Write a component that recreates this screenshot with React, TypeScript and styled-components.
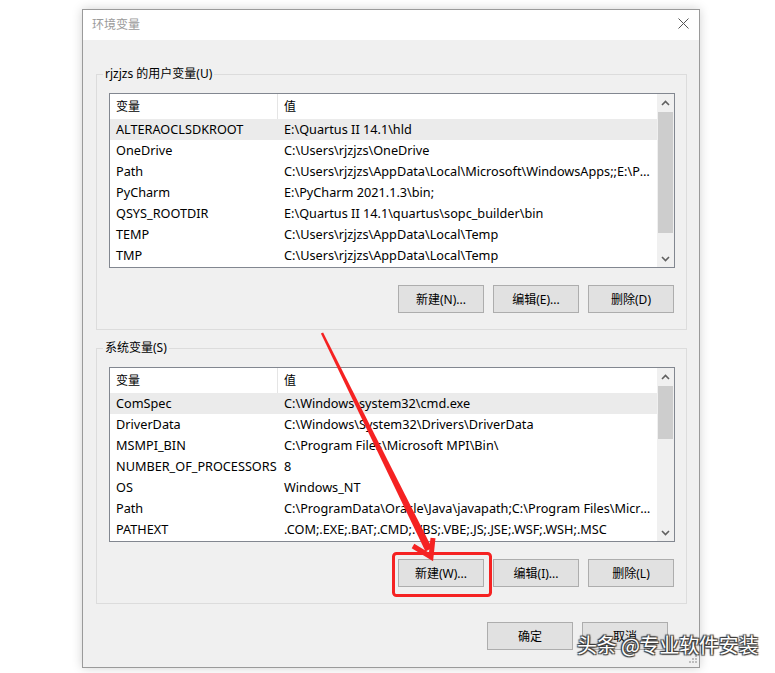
import React from "react";
import styled, { createGlobalStyle } from "styled-components";

const GlobalStyle = createGlobalStyle`
  html, body { margin: 0; padding: 0; background: #ffffff; }
  body {
    font-family: "Noto Sans", "Noto Sans CJK SC", "Liberation Sans", sans-serif;
    font-size: 12px;
    color: #000;
  }
  * { box-sizing: border-box; }
`;

const Page = styled.div`
  position: relative;
  width: 775px;
  height: 673px;
  padding: 9px 0 0 82px;
  overflow: hidden;
`;

const Window = styled.div`
  width: 618px;
  height: 659px;
  border: 1px solid #9a9a9a;
  background: #f0f0f0;
  display: flex;
  flex-direction: column;
  box-shadow: 0 0 10px rgba(0, 0, 0, 0.18);
  position: relative;
`;

const TitleBar = styled.div`
  height: 30px;
  background: #ffffff;
  display: flex;
  align-items: center;
  justify-content: space-between;
  padding: 0 10px 3px 9px;
  color: #9a9a9a;
  font-size: 12px;
`;

const Body = styled.div`
  flex: 1;
  display: flex;
  flex-direction: column;
  padding: 34px 12px 0 13px;
`;

const Group = styled.div<{ $gap?: number }>`
  position: relative;
  height: 256px;
  margin-top: ${(p) => p.$gap ?? 0}px;
  border: 1px solid #dcdcdc;
  padding: 18px 11px 0 12px;
  display: flex;
  flex-direction: column;
`;

const Legend = styled.span`
  position: absolute;
  top: -10px;
  left: 6px;
  padding: 0 2px;
  background: #f0f0f0;
  line-height: 18px;
  color: #000;
`;

const List = styled.div`
  height: 175px;
  border: 1px solid #828790;
  background: #ffffff;
  display: flex;
  font-size: 12.7px;
`;

const Table = styled.div`
  flex: 1;
  display: flex;
  flex-direction: column;
  overflow: hidden;
`;

const HeaderRow = styled.div`
  height: 25px;
  display: flex;
  align-items: center;
`;

const HeaderCell = styled.div<{ $w?: number; $divider?: boolean }>`
  width: ${(p) => (p.$w ? `${p.$w}px` : "auto")};
  flex: ${(p) => (p.$w ? "none" : "1")};
  height: 100%;
  display: flex;
  align-items: center;
  padding-left: 6px;
  padding-bottom: 1px;
  font-size: 12px;
  border-right: ${(p) => (p.$divider ? "1px solid #e5e5e5" : "none")};
`;

const Row = styled.div<{ $selected?: boolean }>`
  height: 21px;
  display: flex;
  align-items: center;
  padding-bottom: 1px;
  background: ${(p) => (p.$selected ? "#ebebeb" : "transparent")};
`;

const NameCell = styled.div`
  width: 168px;
  flex: none;
  padding-left: 6px;
  white-space: nowrap;
  overflow: hidden;
`;

const ValueCell = styled.div`
  flex: 1;
  min-width: 0;
  padding-left: 6px;
  padding-right: 4px;
  white-space: nowrap;
  overflow: hidden;
  text-overflow: ellipsis;
`;

const ScrollBar = styled.div`
  width: 17px;
  background: #f0f0f0;
  display: flex;
  flex-direction: column;
  align-items: center;
`;

const ScrollArrow = styled.div`
  width: 17px;
  height: 17px;
  display: flex;
  align-items: center;
  justify-content: center;
`;

const ScrollTrack = styled.div`
  flex: 1;
  width: 15px;
  display: flex;
  flex-direction: column;
`;

const Thumb = styled.div<{ $h: number }>`
  height: ${(p) => p.$h}px;
  background: #cdcdcd;
  margin-top: 1px;
`;

const ButtonRow = styled.div<{ $top: number; $right: number }>`
  display: flex;
  justify-content: flex-end;
  gap: 9px;
  margin-top: ${(p) => p.$top}px;
  padding-right: ${(p) => p.$right}px;
`;

const Button = styled.div`
  width: 86px;
  height: 28px;
  background: #e1e1e1;
  border: 1px solid #adadad;
  display: flex;
  align-items: center;
  justify-content: center;
  padding-bottom: 1px;
  font-size: 12px;
`;

const Overlay = styled.svg`
  position: absolute;
  left: 0;
  top: 0;
  pointer-events: none;
`;

const Watermark = styled.div`
  position: absolute;
  left: 577px;
  top: 631px;
  font-family: "Noto Sans CJK SC", sans-serif;
  font-size: 20px;
  line-height: 28px;
  letter-spacing: -0.2px;
  color: #ffffff;
  text-shadow: 0 0 1px #3a3a3a, 1px 1px 1px #3a3a3a, -1px -1px 1px #3a3a3a,
    1px -1px 1px #3a3a3a, -1px 1px 1px #3a3a3a;
  white-space: nowrap;
`;

const Grip = styled.svg`
  position: absolute;
  right: 2px;
  bottom: 2px;
`;

type Var = [string, string];

const userVars: Var[] = [
  ["ALTERAOCLSDKROOT", "E:\\Quartus II 14.1\\hld"],
  ["OneDrive", "C:\\Users\\rjzjzs\\OneDrive"],
  ["Path", "C:\\Users\\rjzjzs\\AppData\\Local\\Microsoft\\WindowsApps;;E:\\PyCharm 2021.1.3\\bin;"],
  ["PyCharm", "E:\\PyCharm 2021.1.3\\bin;"],
  ["QSYS_ROOTDIR", "E:\\Quartus II 14.1\\quartus\\sopc_builder\\bin"],
  ["TEMP", "C:\\Users\\rjzjzs\\AppData\\Local\\Temp"],
  ["TMP", "C:\\Users\\rjzjzs\\AppData\\Local\\Temp"],
];

const sysVars: Var[] = [
  ["ComSpec", "C:\\Windows\\system32\\cmd.exe"],
  ["DriverData", "C:\\Windows\\System32\\Drivers\\DriverData"],
  ["MSMPI_BIN", "C:\\Program Files\\Microsoft MPI\\Bin\\"],
  ["NUMBER_OF_PROCESSORS", "8"],
  ["OS", "Windows_NT"],
  ["Path", "C:\\ProgramData\\Oracle\\Java\\javapath;C:\\Program Files\\Microsoft MPI\\Bin\\;C:\\Windows\\system32"],
  ["PATHEXT", ".COM;.EXE;.BAT;.CMD;.VBS;.VBE;.JS;.JSE;.WSF;.WSH;.MSC"],
];

const Chevron = ({ up }: { up: boolean }) => (
  <svg width="9" height="6" viewBox="0 0 9 6">
    <path
      d={up ? "M1 5 L4.5 1.5 L8 5" : "M1 1 L4.5 4.5 L8 1"}
      fill="none"
      stroke="#606060"
      strokeWidth="1.6"
    />
  </svg>
);

const VarList = ({ rows, thumb }: { rows: Var[]; thumb: number }) => (
  <List>
    <Table>
      <HeaderRow>
        <HeaderCell $w={168} $divider>变量</HeaderCell>
        <HeaderCell>值</HeaderCell>
      </HeaderRow>
      {rows.map(([k, v], i) => (
        <Row key={k + i} $selected={i === 0}>
          <NameCell>{k}</NameCell>
          <ValueCell>{v}</ValueCell>
        </Row>
      ))}
    </Table>
    <ScrollBar>
      <ScrollArrow>
        <Chevron up />
      </ScrollArrow>
      <ScrollTrack>
        <Thumb $h={thumb} />
      </ScrollTrack>
      <ScrollArrow>
        <Chevron up={false} />
      </ScrollArrow>
    </ScrollBar>
  </List>
);

export default function App() {
  return (
    <>
      <GlobalStyle />
      <Page>
        <Window>
          <TitleBar>
            <span>环境变量</span>
            <svg width="11" height="11" viewBox="0 0 11 11">
              <path d="M0.5 0.5 L10.5 10.5 M10.5 0.5 L0.5 10.5" stroke="#555" strokeWidth="1" />
            </svg>
          </TitleBar>
          <Body>
            <Group>
              <Legend>rjzjzs 的用户变量(U)</Legend>
              <VarList rows={userVars} thumb={121} />
              <ButtonRow $top={17} $right={1}>
                <Button>新建(N)...</Button>
                <Button>编辑(E)...</Button>
                <Button>删除(D)</Button>
              </ButtonRow>
            </Group>
            <Group $gap={18}>
              <Legend>系统变量(S)</Legend>
              <VarList rows={sysVars} thumb={53} />
              <ButtonRow $top={17} $right={1}>
                <Button>新建(W)...</Button>
                <Button>编辑(I)...</Button>
                <Button>删除(L)</Button>
              </ButtonRow>
            </Group>
            <ButtonRow $top={18} $right={19}>
              <Button>确定</Button>
              <Button>取消</Button>
            </ButtonRow>
          </Body>
          <Grip width="10" height="10" viewBox="0 0 10 10">
            {[
              [8, 0], [8, 3], [5, 3], [8, 6], [5, 6], [2, 6],
            ].map(([x, y], i) => (
              <rect key={i} x={x} y={y} width="2" height="2" fill="#bdbdbd" />
            ))}
          </Grip>
        </Window>
        <Overlay width="775" height="673" viewBox="0 0 775 673">
          <polygon
            points="323.1,332.4 432,548 425.5,551.5 320.9,333.6"
            fill="#f52222"
          />
          <polyline
            points="413,546 431,557 433,538"
            fill="none"
            stroke="#f52222"
            strokeWidth="5"
            strokeLinejoin="miter"
          />
          <rect
            x="393.5"
            y="553.5"
            width="97"
            height="42"
            rx="3"
            fill="none"
            stroke="#f52222"
            strokeWidth="3"
          />
        </Overlay>
        <Watermark>头条 @专业软件安装</Watermark>
      </Page>
    </>
  );
}
